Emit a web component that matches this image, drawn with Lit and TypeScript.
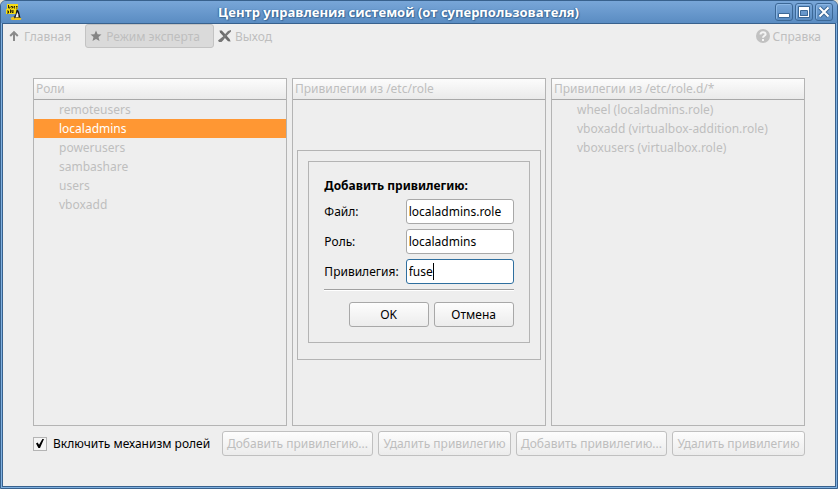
import { LitElement, html, css, svg } from "lit";
import { customElement, property } from "lit/decorators.js";

const appIcon = svg`<svg class="app" width="16" height="16" viewBox="0 0 16 16" aria-hidden="true">
  <path fill="#f7dd14" d="M1 0h11v5h-1v2h1v3H0V5h1z"/>
  <g stroke="#2a2508" stroke-width="1" fill="none">
    <path d="M2.500 1v3h1.500V2.500M5 2.500h1.500V4H5.500M9 2.500H8V4h1M10 2.500h1.500M10 4h1.500"/>
    <path d="M1 7h1.500v2H1M4.500 5.500V9M6 6v2.500h1.500M5.500 7h2.500"/>
  </g>
  <path fill="#16161a" d="M10.500 5.500l1.500.5 1 2 1 4 .5 2H12l-4-1.500 1.500-2z"/>
  <path fill="#f4f4f4" d="M11.300 8l1 2.500.2 2.500H9.500z"/>
  <path fill="#f0c419" d="M4.500 14l3-1.500 1.500 1h4l2.500 1-1 1.500H5.500z"/>
  <path fill="#3a3a3a" d="M7.500 12.500l2-1 .5 2-1.500 1z"/>
</svg>`;

const upIcon = svg`<svg width="16" height="16" viewBox="0 0 16 16" aria-hidden="true">
  <path fill="none" stroke="#8a8a8a" stroke-width="2" d="M8 13V4.500M4.200 8L8 4.200l3.800 3.800"/></svg>`;
const starIcon = svg`<svg width="16" height="16" viewBox="0 0 16 16" aria-hidden="true">
  <path fill="#848484" d="M8 2.500l1.600 3.700 3.900.3-3 2.600 1 3.900L8 10.900 4.500 13l1-3.900-3-2.600 3.900-.3z"/></svg>`;
const exitIcon = svg`<svg width="16" height="16" viewBox="0 0 16 16" aria-hidden="true">
  <path fill="#6c6c6c" d="M2.500 2.500h2.300l4 4.200 3.800 4.300 1 2.500-2.600-.2L7 9 3 4.500z"/>
  <path fill="#777" d="M14 2v1.500L9.500 8 6 12.500 4.500 14H2l-1-1.500L6 8.500l5-5.500z"/></svg>`;
const helpIcon = svg`<svg width="16" height="16" viewBox="0 0 16 16" aria-hidden="true">
  <circle cx="8" cy="8" r="7" fill="#c1c1c1"/>
  <path fill="none" stroke="#f4f4f4" stroke-width="2" d="M5.500 6.500C5.500 3.500 10.600 3.500 10.600 6.200 10.600 7.800 8 7.800 8 9.800"/>
  <path fill="#f4f4f4" d="M7 11h2v2H7z"/></svg>`;

const minIcon = svg`<svg width="12" height="12" viewBox="0 0 12 12" aria-hidden="true">
  <path fill="#fff" stroke="#3c6896" d="M.5 7.500h11v4H.5z"/></svg>`;
const maxIcon = svg`<svg width="12" height="12" viewBox="0 0 12 12" aria-hidden="true">
  <path fill="none" stroke="#3c6896" d="M.5.5h11v11H.5z"/>
  <path fill="#fff" fill-rule="evenodd" d="M1 1h10v10H1zM2 5v5h8V5z"/>
  <path fill="none" stroke="#3c6896" d="M2.500 4.500h7v5h-7z"/></svg>`;
const closeIcon = svg`<svg width="12" height="12" viewBox="0 0 12 12" aria-hidden="true">
  <path stroke="#3c6896" stroke-width="4" d="M1.500 1.500l9 9M10.500 1.500l-9 9"/>
  <path stroke="#fff" stroke-width="2" d="M1.500 1.500l9 9M10.500 1.500l-9 9"/></svg>`;

@customElement("role-panel")
class RolePanel extends LitElement {
  @property() heading = "";
  @property({ attribute: false }) items: string[] = [];
  @property() selected = "";

  static styles = css`
    :host {
      display: block;
      flex: 1 1 0;
      min-width: 0;
      border: 1px solid #b4b4b4;
      color: #bebebe;
    }
    .head {
      margin: 0;
      height: 20px;
      padding: 0 2px;
      border-bottom: 1px solid #a8a8a8;
      background: linear-gradient(#fcfcfc, #eaeaea);
      font-size: 12px;
      font-weight: 400;
      line-height: 20px;
    }
    ul {
      margin: 0;
      padding: 0;
      list-style: none;
    }
    li {
      padding-left: 25px;
      line-height: 19px;
      white-space: nowrap;
      overflow: hidden;
    }
    .on {
      background: #ff9733;
      color: #fff;
    }
  `;

  render() {
    return html`<h2 class="head">${this.heading}</h2>
      <ul>
        ${this.items.map((i) => html`<li class=${i === this.selected ? "on" : ""}>${i}</li>`)}
      </ul>`;
  }
}

@customElement("app-root")
class AppRoot extends LitElement {
  static styles = css`
    :host {
      display: block;
      background: #e6e2d4;
      font: 12px "Noto Sans", "Open Sans", sans-serif;
      color: #000;
    }
    * {
      box-sizing: border-box;
    }
    .window {
      display: flex;
      flex-direction: column;
      min-height: 100vh;
      border: 1px solid #38618d;
      border-radius: 6px 6px 0 0;
      background: #7fb0e0;
      overflow: hidden;
    }
    .title {
      display: flex;
      align-items: center;
      height: 22px;
      padding: 0 4px 0 5px;
      background: linear-gradient(#78a6d8, #5a8cc2);
    }
    .title h1 {
      flex: 1;
      margin: 0;
      text-align: center;
      font: bold 13px/22px "Open Sans", "Noto Sans", sans-serif;
      color: #fff;
      text-shadow: 1px 1px 1px #3c6896, -1px 0 1px #3c6896;
      white-space: nowrap;
    }
    .controls {
      display: flex;
      gap: 2px;
    }
    .controls button {
      display: grid;
      place-items: center;
      width: 18px;
      height: 18px;
      padding: 0;
      border: 1px solid #3c6896;
      border-radius: 3px;
      background: linear-gradient(#78a6d8, #5a8cc2);
      box-shadow: inset 1px 1px #8bb6e4;
    }
    .body {
      position: relative;
      flex: 1;
      display: flex;
      flex-direction: column;
      margin: 0 1px 1px;
      border: 1px solid #38618d;
      background: #eeeeee;
    }
    .toolbar {
      display: flex;
      height: 24px;
    }
    .toolbar button {
      display: flex;
      align-items: center;
      gap: 2px;
      padding: 0 13px 0 2px;
      border: 1px solid transparent;
      border-radius: 3px;
      background: none;
      font: inherit;
      color: #bebebe;
    }
    .toolbar .active {
      border-color: #c3c3c3;
      background: #dadada;
    }
    .toolbar .help {
      margin-left: auto;
    }
    .main {
      flex: 1;
      display: flex;
      flex-direction: column;
      gap: 5px;
      padding: 30px;
    }
    .panels {
      flex: 1;
      display: flex;
      gap: 5px;
    }
    .actions {
      display: flex;
      gap: 5px;
    }
    .toggle {
      flex: 1;
      display: flex;
      align-items: center;
      gap: 6px;
      white-space: nowrap;
    }
    .toggle input {
      appearance: none;
      display: grid;
      place-items: center;
      width: 14px;
      height: 14px;
      margin: 0;
      border: 1px solid #b4b4b4;
      background: #f4f4f4;
    }
    .toggle input:checked::before {
      content: "";
      width: 8px;
      height: 9px;
      background: #000;
      clip-path: polygon(0 50%, 20% 40%, 38% 65%, 80% 0, 100% 0, 50% 100%, 30% 100%);
    }
    .push {
      height: 25px;
      padding: 0 4px;
      border: 1px solid #a8a8a8;
      border-radius: 3px;
      background: linear-gradient(#fdfdfd, #ececec);
      font: inherit;
      color: #000;
      white-space: nowrap;
    }
    .push:disabled {
      border-color: #c0c0c0;
      color: #bebebe;
    }
    .actions .push {
      min-width: 133px;
    }
    .overlay {
      position: absolute;
      inset: 0;
      display: grid;
      place-items: center;
    }
    .frame {
      padding: 10px 10px 16px;
      border: 1px solid #b4b4b4;
      background: #eeeeee;
    }
    form {
      padding: 15px;
      border: 1px solid #b4b4b4;
    }
    form h2 {
      margin: 0 0 5px;
      font-size: 12px;
      line-height: 17px;
    }
    .fields {
      display: grid;
      grid-template-columns: auto 108px;
      gap: 5px 7px;
      align-items: center;
      padding-bottom: 5px;
      border-bottom: 1px solid #a0a0a0;
      box-shadow: 0 1px #fff;
    }
    .box {
      position: relative;
      display: flex;
    }
    .box input {
      width: 100%;
      height: 25px;
      padding: 0 2px;
      border: 1px solid #a8a8a8;
      border-radius: 3px;
      background: #fff;
      font: inherit;
      color: #000;
    }
    .box .current {
      border-color: #2f6f9f;
    }
    .caret {
      position: absolute;
      left: 27px;
      top: 4px;
      width: 1px;
      height: 17px;
      background: #000;
    }
    .buttons {
      display: flex;
      justify-content: flex-end;
      gap: 5px;
      padding-top: 12px;
    }
    .buttons .push {
      width: 80px;
    }
  `;

  render() {
    return html`<div class="window">
      <header class="title">
        ${appIcon}
        <h1>Центр управления системой (от суперпользователя)</h1>
        <div class="controls">
          <button aria-label="Свернуть">${minIcon}</button>
          <button aria-label="Развернуть">${maxIcon}</button>
          <button aria-label="Закрыть">${closeIcon}</button>
        </div>
      </header>
      <div class="body">
        <nav class="toolbar">
          <button disabled>${upIcon}Главная</button>
          <button class="active" disabled>${starIcon}Режим эксперта</button>
          <button disabled>${exitIcon}Выход</button>
          <button class="help" disabled>${helpIcon}Справка</button>
        </nav>
        <main class="main">
          <div class="panels">
            <role-panel
              heading="Роли"
              selected="localadmins"
              .items=${["remoteusers", "localadmins", "powerusers", "sambashare", "users", "vboxadd"]}
            ></role-panel>
            <role-panel heading="Привилегии из /etc/role"></role-panel>
            <role-panel
              heading="Привилегии из /etc/role.d/*"
              .items=${[
                "wheel (localadmins.role)",
                "vboxadd (virtualbox-addition.role)",
                "vboxusers (virtualbox.role)",
              ]}
            ></role-panel>
          </div>
          <div class="actions">
            <label class="toggle"><input type="checkbox" checked />Включить механизм ролей</label>
            <button class="push" disabled>Добавить привилегию...</button>
            <button class="push" disabled>Удалить привилегию</button>
            <button class="push" disabled>Добавить привилегию...</button>
            <button class="push" disabled>Удалить привилегию</button>
          </div>
        </main>
        <div class="overlay">
          <div class="frame" role="dialog" aria-labelledby="dlg">
            <form @submit=${(e: Event) => e.preventDefault()}>
              <h2 id="dlg">Добавить привилегию:</h2>
              <div class="fields">
                <label for="file">Файл:</label>
                <div class="box"><input id="file" value="localadmins.role" /></div>
                <label for="role">Роль:</label>
                <div class="box"><input id="role" value="localadmins" /></div>
                <label for="priv">Привилегия:</label>
                <div class="box">
                  <input id="priv" class="current" value="fuse" /><span class="caret"></span>
                </div>
              </div>
              <div class="buttons">
                <button class="push">OK</button>
                <button class="push" type="button">Отмена</button>
              </div>
            </form>
          </div>
        </div>
      </div>
    </div>`;
  }
}
